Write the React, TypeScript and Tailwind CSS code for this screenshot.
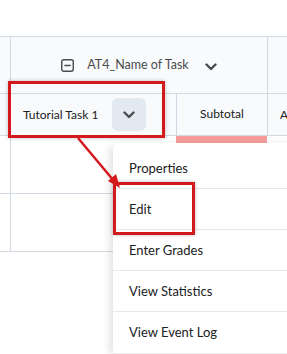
import { ReactNode } from "react";

const menuItems = ["Properties", "Edit", "Enter Grades", "View Statistics", "View Event Log"];

function Chevron() {
  return (
    <svg width="12" height="8" viewBox="0 0 12 8" fill="none">
      <path d="M1.5 1.5 6 6l4.5-4.5" stroke="#494c4e" strokeWidth="2.4" strokeLinecap="round" strokeLinejoin="round" />
    </svg>
  );
}

function MinusBox() {
  return (
    <svg width="13" height="13" viewBox="0 0 13 13" fill="none">
      <rect x="0.75" y="0.75" width="11.5" height="11.5" rx="2" stroke="#494c4e" strokeWidth="1.4" />
      <path d="M4 6.5h5" stroke="#494c4e" strokeWidth="1.6" strokeLinecap="round" />
    </svg>
  );
}

function Cell({ className, children }: { className?: string; children?: ReactNode }) {
  return <div className={"flex items-center " + (className ?? "")}>{children}</div>;
}

export default function App() {
  return (
    <div className="relative h-[354px] w-[287px] overflow-hidden bg-white font-['Lato',sans-serif] text-[#494c4e]">
      <div className="h-[36px]" />

      {/* header row */}
      <div className="flex h-[57px] border-t border-[#d3d9e3] bg-[#f9fafc]">
        <Cell className="w-[11px] shrink-0 border-r border-[#d3d9e3]" />
        <Cell className="w-[256px] shrink-0 justify-center gap-[13px] pt-[1px] text-[12.5px]">
          <MinusBox />
          <span>AT4_Name of Task</span>
          <span className="ml-[3px] pt-[3px]">
            <Chevron />
          </span>
        </Cell>
        <Cell className="flex-1 border-l border-[#d3d9e3]" />
      </div>

      {/* column row */}
      <div className="flex h-[42px] border-t border-[#d3d9e3] bg-[#f9fafc]">
        <Cell className="w-[11px] shrink-0 border-r border-[#d3d9e3]" />
        <Cell className="w-[165px] shrink-0 justify-between pl-[12px] pr-[30px] text-[12px] text-[#202122]">
          <span>Tutorial Task 1</span>
          <span className="flex h-[33px] w-[34px] items-center justify-center rounded-[6px] bg-[#e3e9f1]">
            <Chevron />
          </span>
        </Cell>
        <Cell className="w-[91px] shrink-0 justify-center border-l border-[#d3d9e3] pb-[2px] text-[12px] text-[#202122]">
          Subtotal
        </Cell>
        <Cell className="flex-1 border-l border-[#d3d9e3] pl-[12px] text-[12px] text-[#202122]">A</Cell>
      </div>

      {/* body rows */}
      {[0, 1].map((row) => (
        <div key={row} className="flex h-[58px] border-t border-[#d3d9e3]">
          <div className="w-[11px] shrink-0 border-r border-[#d3d9e3]" />
          <div className="w-[165px] shrink-0" />
          <div className="w-[91px] shrink-0">
            {row === 0 && <div className="h-[8px] bg-[#f69b9b]" />}
          </div>
          <div className="flex-1" />
        </div>
      ))}
      <div className="border-t border-[#d3d9e3]" />

      {/* dropdown menu */}
      <div className="absolute left-[113px] top-[143px] w-[190px] rounded-tl-[6px] bg-white pt-[5px] text-[13px] text-[#202122] shadow-[-3px_2px_8px_rgba(0,0,0,0.12)]">
        {menuItems.map((item, i) => (
          <div
            key={item}
            className={
              "flex h-[41px] items-center pl-[16px] pt-[1px] " +
              (i < menuItems.length - 1 ? "border-b border-[#e3e9f1]" : "")
            }
          >
            {item}
          </div>
        ))}
      </div>

      {/* annotation boxes */}
      <div className="absolute left-[8px] top-[81px] h-[57px] w-[157px] border-[3px] border-[#d4191d] shadow-[0_0_4px_rgba(0,0,0,0.25)]" />
      <div className="absolute left-[113px] top-[182px] h-[53px] w-[82px] border-[3px] border-[#d4191d] shadow-[0_0_4px_rgba(0,0,0,0.25)]" />

      {/* annotation arrow */}
      <svg className="absolute left-0 top-0" width="287" height="354" viewBox="0 0 287 354" fill="none">
        <path d="M78 138 L114 181" stroke="#d4191d" strokeWidth="2.5" />
        <path d="M120 188 L108 181 L116 174 Z" fill="#d4191d" />
      </svg>
    </div>
  );
}
